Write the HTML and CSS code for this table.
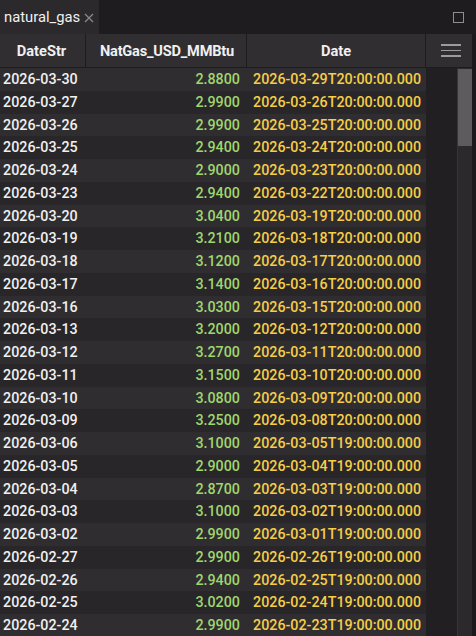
FILE: index.html
```html
<!DOCTYPE html>
<html>
<head>
<meta charset="utf-8">
<link rel="stylesheet" href="styles.css">
</head>
<body>
<div class="panel">
  <div class="tabbar">
    <div class="tab"><span class="tab-title">natural_gas</span><svg class="tab-close" width="10" height="10" viewBox="0 0 10 10"><path d="M1 1L9 9M9 1L1 9" stroke="#8a888b" stroke-width="1.3" fill="none"/></svg></div>
    <div class="tab-fill"></div>
    <div class="maximize"></div>
  </div>
  <div class="grid">
    <div class="header">
      <div class="hcell c1">DateStr</div>
      <div class="hcell c2">NatGas_USD_MMBtu</div>
      <div class="hcell c3">Date</div>
      <div class="hcell c4"><span class="burger"><i></i><i></i><i></i></span></div>
    </div>
    <div class="body">
      <div class="rows" id="rows"></div>
      <div class="gutter"></div>
      <div class="scroll"><div class="thumb"></div></div>
    </div>
  </div>
</div>
<script src="app.js"></script>
</body>
</html>
```
FILE: app.js
```js
const data = [
["2026-03-30","2.8800","2026-03-29T20:00:00.000"],
["2026-03-27","2.9900","2026-03-26T20:00:00.000"],
["2026-03-26","2.9900","2026-03-25T20:00:00.000"],
["2026-03-25","2.9400","2026-03-24T20:00:00.000"],
["2026-03-24","2.9000","2026-03-23T20:00:00.000"],
["2026-03-23","2.9400","2026-03-22T20:00:00.000"],
["2026-03-20","3.0400","2026-03-19T20:00:00.000"],
["2026-03-19","3.2100","2026-03-18T20:00:00.000"],
["2026-03-18","3.1200","2026-03-17T20:00:00.000"],
["2026-03-17","3.1400","2026-03-16T20:00:00.000"],
["2026-03-16","3.0300","2026-03-15T20:00:00.000"],
["2026-03-13","3.2000","2026-03-12T20:00:00.000"],
["2026-03-12","3.2700","2026-03-11T20:00:00.000"],
["2026-03-11","3.1500","2026-03-10T20:00:00.000"],
["2026-03-10","3.0800","2026-03-09T20:00:00.000"],
["2026-03-09","3.2500","2026-03-08T20:00:00.000"],
["2026-03-06","3.1000","2026-03-05T19:00:00.000"],
["2026-03-05","2.9000","2026-03-04T19:00:00.000"],
["2026-03-04","2.8700","2026-03-03T19:00:00.000"],
["2026-03-03","3.1000","2026-03-02T19:00:00.000"],
["2026-03-02","2.9900","2026-03-01T19:00:00.000"],
["2026-02-27","2.9900","2026-02-26T19:00:00.000"],
["2026-02-26","2.9400","2026-02-25T19:00:00.000"],
["2026-02-25","3.0200","2026-02-24T19:00:00.000"],
["2026-02-24","2.9900","2026-02-23T19:00:00.000"]
];
const rows = document.getElementById("rows");
data.forEach(function (d) {
  const r = document.createElement("div");
  r.className = "row";
  r.innerHTML = '<div class="cell c1 str">' + d[0] + '</div>' +
    '<div class="cell c2 num">' + d[1] + '</div>' +
    '<div class="cell c3 dt">' + d[2] + '</div>';
  rows.appendChild(r);
});
```
FILE: styles.css
```css
html, body {
  margin: 0;
  padding: 0;
  background: #1b191c;
  height: 100%;
  overflow: hidden;
}
.panel {
  font-family: Roboto, "Noto Sans", sans-serif;
  font-size: 14.3px;
  font-weight: 500;
  color: #f0f0f0;
  display: flex;
  flex-direction: column;
  height: 636px;
}
.tabbar {
  height: 34px;
  display: flex;
  align-items: stretch;
  background: #1e1c1f;
  flex: none;
}
.tab {
  width: 99px;
  background: #2b292c;
  display: flex;
  align-items: center;
  padding-left: 4px;
  box-sizing: border-box;
}
.tab-title {
  color: #f0f0f0;
  font-weight: 400;
  font-size: 14.8px;
}
.tab-close {
  margin-left: 4px;
  margin-top: 1px;
}
.tab-fill {
  flex: 1;
}
.maximize {
  width: 9px;
  height: 9px;
  border: 1.5px solid #8f8d90;
  margin: 12px 12px 0 0;
}
.grid {
  flex: 1;
  display: flex;
  flex-direction: column;
  width: 472px;
  overflow: hidden;
}
.header {
  height: 34px;
  flex: none;
  display: grid;
  grid-template-columns: 86px 161px 179px 46px;
  background: #312e32;
  border-bottom: 1px solid #1d1b1e;
  box-sizing: border-box;
  font-size: 14.6px;
}
.hcell {
  display: flex;
  align-items: center;
  justify-content: center;
  font-weight: 700;
  border-right: 1px solid #1d1b1e;
  padding-top: 1px;
}
.hcell.c2 { letter-spacing: -0.2px; padding-left: 2px; }
.hcell.c4 {
  border-right: none;
}
.hcell.c1 { padding-right: 2px; }
.burger {
  display: flex;
  flex-direction: column;
  gap: 3.8px;
  margin-left: 4px;
  margin-top: -1px;
}
.burger i {
  display: block;
  width: 20px;
  height: 1.6px;
  background: #9c9a9d;
}
.body {
  flex: 1;
  display: flex;
  overflow: hidden;
}
.rows {
  width: 426px;
  flex: none;
}
.row {
  display: grid;
  grid-template-columns: 86px 161px 179px;
  height: 22.75px;
  line-height: 23.5px;
  background: #302d31;
}
.row:nth-child(even) {
  background: #282629;
}
.cell {
  white-space: nowrap;
  overflow: hidden;
}
.str {
  padding-left: 3px;
  color: #f0f0f0;
}
.num {
  text-align: right;
  padding-right: 7px;
  color: #9fd66e;
}
.dt {
  padding-left: 6px;
  color: #f6cd48;
}
.gutter {
  width: 31px;
  flex: none;
  background: #211f22;
}
.scroll {
  width: 15px;
  flex: none;
  background: #2b292c;
  border-left: 1px solid #373538;
  box-sizing: border-box;
}
.thumb {
  height: 77px;
  margin-top: 1px;
  background: #5d5b5e;
}
```
